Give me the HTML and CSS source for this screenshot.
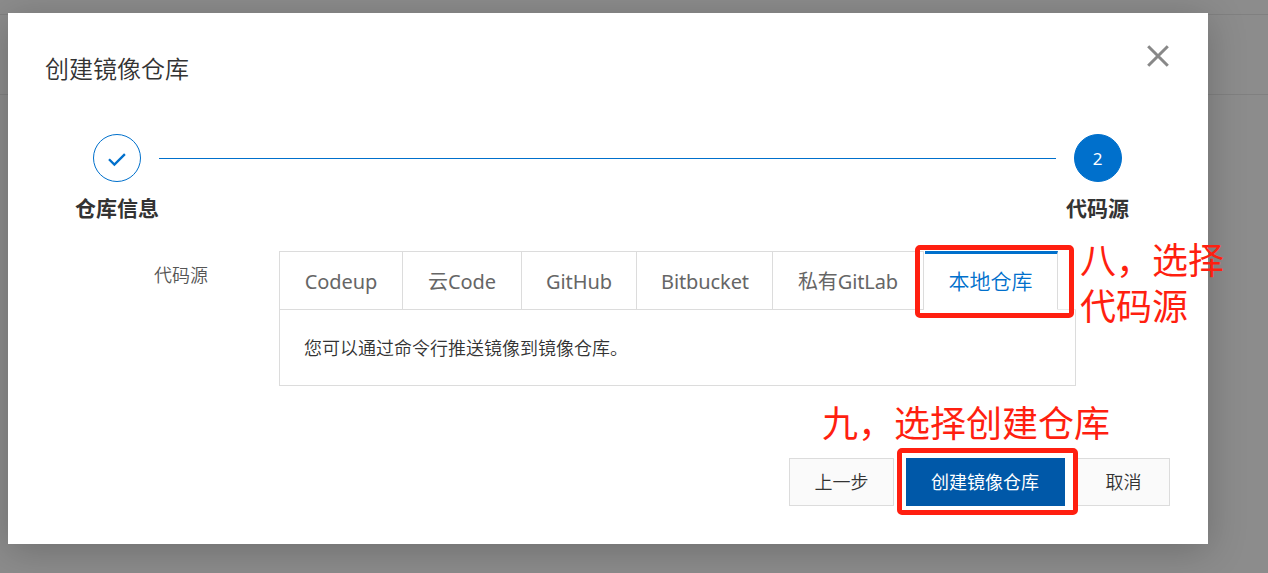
FILE: index.html
```html
<!DOCTYPE html>
<html lang="zh-CN">
<head>
<meta charset="utf-8">
<title>创建镜像仓库</title>
<link rel="stylesheet" href="styles.css">
</head>
<body>
<div class="backdrop"><div class="backdrop-band"></div></div>
<main class="dialog">
  <header class="dialog-header">
    <h1 class="dialog-title">创建镜像仓库</h1>
    <button class="close" aria-label="关闭"><svg width="22" height="22" viewBox="0 0 22 22"><path d="M1.2 1.2 20.8 20.8M20.8 1.2 1.2 20.8" fill="none" stroke="#888" stroke-width="3"/></svg></button>
  </header>
  <section class="steps">
    <div class="step">
      <div class="step-circle"><svg width="18" height="14" viewBox="0 0 18 14"><path d="M1 6.2 6.4 11.6 16.9 1.1" fill="none" stroke="#0070cc" stroke-width="2.3"/></svg></div>
      <div class="step-label">仓库信息</div>
    </div>
    <div class="step-line"></div>
    <div class="step">
      <div class="step-circle step-circle-current">2</div>
      <div class="step-label">代码源</div>
    </div>
  </section>
  <section class="source">
    <div class="source-label">代码源</div>
    <div class="tabs">
      <nav class="tab-list">
        <div class="tab tab-codeup">Codeup</div>
        <div class="tab tab-yun">云Code</div>
        <div class="tab tab-github">GitHub</div>
        <div class="tab tab-bitbucket">Bitbucket</div>
        <div class="tab tab-gitlab">私有GitLab</div>
        <div class="tab tab-local">本地仓库</div>
        <div class="tab-rest"></div>
      </nav>
      <div class="tab-panel">您可以通过命令行推送镜像到镜像仓库。</div>
    </div>
  </section>
  <footer class="actions">
    <button class="btn btn-back">上一步</button>
    <button class="btn btn-primary">创建镜像仓库</button>
    <button class="btn btn-cancel">取消</button>
  </footer>
</main>
<div class="mark mark-tab"></div>
<div class="mark mark-button"></div>
<div class="note note-tab">八，选择<br>代码源</div>
<div class="note note-button">九，选择创建仓库</div>
</body>
</html>
```

FILE: styles.css
```css
* { box-sizing: border-box; }
body {
  margin: 0;
  height: 573px;
  padding: 13px 60px 29px 8px;
  overflow: hidden;
  position: relative;
  background: #8c8c8c;
  color: #333;
  font-family: "Noto Sans", "Noto Sans CJK SC", sans-serif;
  font-size: 18px;
}
.backdrop { position: absolute; inset: 0; padding-top: 14px; }
.backdrop-band { height: 81px; border-top: 1px solid #808080; border-bottom: 1px solid #808080; }
.dialog {
  position: relative;
  width: 1200px;
  height: 531px;
  background: #fff;
  box-shadow: 0 6px 36px rgba(0, 0, 0, .22);
}
.dialog-header { display: flex; justify-content: space-between; height: 121px; padding: 32px 39px 0 37px; }
.dialog-title { margin: 5px 0 0; font-size: 24px; line-height: 36px; font-weight: 350; font-family: "Noto Sans CJK SC", sans-serif; height: 36px; }
.close { width: 22px; height: 22px; padding: 0; border: 0; background: none; }
.close svg, .step-circle svg { display: block; }
.steps { display: flex; align-items: flex-start; height: 117px; padding: 0 62px; }
.step { width: 94px; display: flex; flex-direction: column; align-items: center; }
.step:last-child { width: 95px; margin-left: -6px; margin-right: 1px; }
.step-circle {
  width: 48px;
  height: 48px;
  border: 1px solid #0070cc;
  border-radius: 50%;
  display: flex;
  align-items: center;
  justify-content: center;
}
.step-circle svg { margin-top: 4px; }
.step-circle-current { background: #0070cc; color: #fff; font-size: 17px; }
.step-label { margin-top: 11px; font-size: 21px; line-height: 30px; font-weight: 700; white-space: nowrap; }
.step-line { flex: 1; height: 1px; margin: 24px 0 0 -5px; background: #0070cc; }
.source { display: flex; }
.source-label { width: 271px; padding: 10px 0 0 146px; line-height: 27px; color: #555; font-family: "Noto Sans CJK SC", sans-serif; font-weight: 350; }
.tabs { width: 797px; }
.tab-list { display: flex; height: 58px; }
.tab {
  display: flex;
  align-items: center;
  justify-content: center;
  padding-top: 2px;
  border-top: 1px solid #dcdcdc;
  border-right: 1px solid #dcdcdc;
  border-bottom: 1px solid #dcdcdc;
  height: 59px;
  color: #666;
  font-size: 20px;
  font-weight: 400;
  letter-spacing: -.1px;
  line-height: 30px;
  white-space: nowrap;
}
.tab-codeup { width: 124px; border-left: 1px solid #dcdcdc; }
.tab-yun { width: 119px; }
.tab-github { width: 115px; }
.tab-bitbucket { width: 136px; padding-left: 1px; }
.tab-gitlab { width: 151px; }
.tab-local { width: 133px; margin-left: 1px; padding: 0 1px 4px 0; border-top: 3px solid #0070cc; border-bottom-color: #fff; color: #0070cc; font-family: "Noto Sans CJK SC", sans-serif; font-size: 21px; font-weight: 350; letter-spacing: 0; }
.tab-rest { flex: 1; height: 59px; border-bottom: 1px solid #ebebeb; }
.tab-panel { height: 77px; border: 1px solid #dcdcdc; border-top: 0; padding: 25px 24px 0; line-height: 27px; font-family: "Noto Sans CJK SC", sans-serif; font-weight: 350; }
.actions { display: flex; margin-top: 72px; padding-left: 781px; }
.btn {
  height: 48px;
  padding: 0 0 2px;
  border: 1px solid #dcdcdc;
  background: #fafafa;
  color: #333;
  font-family: "Noto Sans CJK SC", sans-serif;
  font-size: 18px;
  line-height: 27px;
  font-weight: 350;
}
.btn-back { width: 105px; }
.btn-primary { width: 159px; margin-left: 12px; padding-right: 1px; background: #0058a8; border-color: #0058a8; color: #fff; font-weight: 400; }
.btn-cancel { width: 93px; margin-left: 12px; }
.mark { position: absolute; border: 5px solid #ff1f10; border-radius: 5px; }
.mark-tab { left: 915px; top: 245px; width: 159px; height: 73px; }
.mark-button { left: 897px; top: 448px; width: 181px; height: 67px; }
.note { position: absolute; color: #ff1f10; font-family: "Noto Sans CJK SC", sans-serif; font-size: 36px; line-height: 46px; font-weight: 400; white-space: nowrap; }
.note-tab { left: 1080px; top: 235px; }
.note-button { left: 822px; top: 398px; }
```
